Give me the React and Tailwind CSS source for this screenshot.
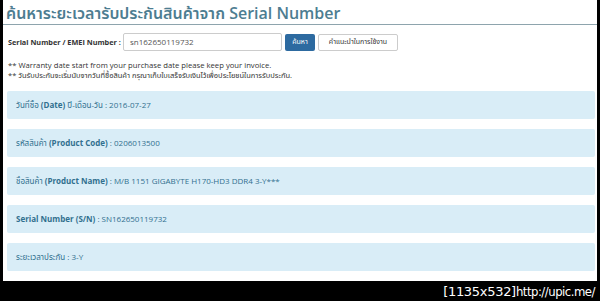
import React from 'react';

const rows = [
    { label: 'วันที่ซื้อ ', en: '(Date)', rest: ' ปี-เดือน-วัน : 2016-07-27' },
    { label: 'รหัสสินค้า ', en: '(Product Code)', rest: ' : 0206013500' },
    { label: 'ชื่อสินค้า ', en: '(Product Name)', rest: ' : M/B 1151 GIGABYTE H170-HD3 DDR4 3-Y***' },
    { label: '', en: 'Serial Number (S/N)', rest: ' : SN162650119732' },
    { label: 'ระยะเวลาประกัน', en: '', rest: ' : 3-Y' },
];

const InfoRow = ({ row }) => (
    <div className="h-[28px] flex items-center px-[9px] bg-[#d9edf7] rounded-[2px] text-[8px] text-[#31708f]">
        <span className="whitespace-pre">
            {row.label}
            {row.en && <b>{row.en}</b>}
            {row.rest}
        </span>
    </div>
);

const App = () => {
    return (
        <div className="w-[600px] h-[301px] bg-black flex flex-col" style={{ fontFamily: '"Open Sans", "Noto Sans", "Noto Sans Thai", sans-serif' }}>
            <div className="mx-[3px] h-[281px] bg-white flex flex-col">
                <div className="border-b border-[#8ea4ad] h-[25px] px-[3px] flex items-end pb-[3px]">
                    <h1 className="text-[16px] leading-none font-semibold text-[#4d7d91] whitespace-nowrap">ค้นหาระยะเวลารับประกันสินค้าจาก Serial Number</h1>
                </div>
                <div className="flex items-center mt-[8px] px-[5px]">
                    <span className="text-[7.3px] font-bold text-[#333] w-[115px] shrink-0 whitespace-nowrap">Serial Number / EMEI Number :</span>
                    <div className="w-[159px] h-[18px] border border-[#ccc] rounded-[2px] flex items-center px-[6px] text-[8px] text-[#555]">sn162650119732</div>
                    <button className="ml-[3px] w-[30px] h-[17px] bg-[#2d6aa0] text-white text-[7px] rounded-[2px]">ค้นหา</button>
                    <button className="ml-[3px] w-[80px] h-[17px] bg-white border border-[#ccc] text-[#333] text-[7px] rounded-[2px]">คำแนะนำในการใช้งาน</button>
                </div>
                <div className="mt-[9px] px-[5px] text-[#333] leading-[10px] whitespace-nowrap">
                    <p className="text-[7.7px]">** Warranty date start from your purchase date please keep your invoice.</p>
                    <p className="text-[7.5px]">** วันรับประกันจะเริ่มนับจากวันที่ซื้อสินค้า กรุณาเก็บใบเสร็จรับเงินไว้เพื่อประโยชน์ในการรับประกัน.</p>
                </div>
                <div className="mt-[11px] pl-[4px] pr-[2px] flex flex-col gap-[10px]">
                    {rows.map((row, i) => (
                        <InfoRow key={i} row={row} />
                    ))}
                </div>
            </div>
            <div className="flex-1 flex items-center justify-end pr-[5px] text-white text-[13px] leading-none">
                <span style={{ fontFamily: '"DejaVu Sans", sans-serif' }} className="tracking-[-0.3px]">[1135x532]</span>
                <span style={{ fontFamily: '"DejaVu Sans Condensed", "Liberation Sans", sans-serif' }} className="tracking-[-0.5px]">http://upic.me/</span>
            </div>
        </div>
    );
};

export default App;
